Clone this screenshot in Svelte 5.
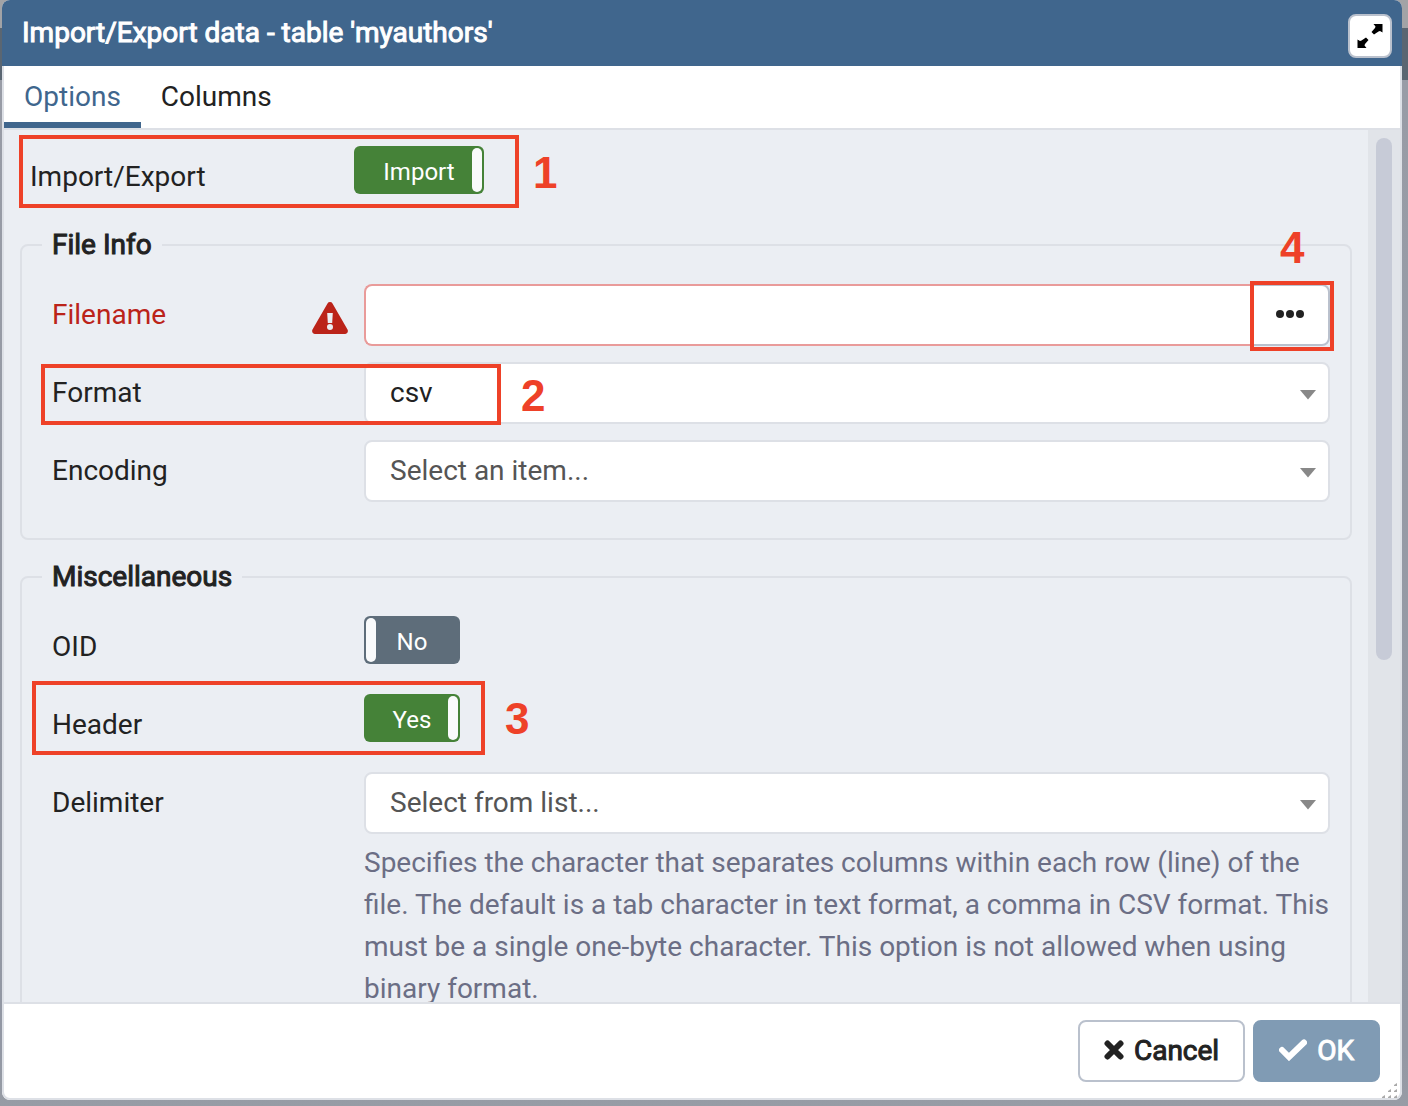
<script>
  let activeTab = $state('options');
  let isImport = $state(true);
  let oid = $state(false);
  let header = $state(true);
  let filename = $state('');
  let format = $state('csv');
  let encoding = $state('');
  let delimiter = $state('');
</script>

{#snippet caret()}
  <svg class="caret" viewBox="0 0 16 10" aria-hidden="true"><path d="M0 0h16L8 9.500z" /></svg>
{/snippet}

<main class="backdrop">
  <section class="dialog" role="dialog" aria-labelledby="dialog-title">
    <header class="titlebar">
      <h1 id="dialog-title">Import/Export data - table 'myauthors'</h1>
      <button class="maximize" type="button" aria-label="Maximize">
        <svg viewBox="0 0 26 26" aria-hidden="true">
          <path d="M17 1h8.500v8.500L23 8l-1.500.5-4.500 3-2.500-2.500L18 5l.500-1.500L16.500 1z" />
          <path d="M.5 16.500L3 18l1.500-.5 4.500-3 2.500 2.500L8 21l-.500 1.500L9.500 25h-9z" />
        </svg>
      </button>
    </header>

    <nav class="tabs">
      <button type="button" class:active={activeTab === 'options'} onclick={() => (activeTab = 'options')}>Options</button>
      <button type="button" class:active={activeTab === 'columns'} onclick={() => (activeTab = 'columns')}>Columns</button>
    </nav>

    <div class="body">
      <form class="content" id="options-form">
        <div class="row lead">
          <label for="direction">Import/Export</label>
          <span class="switch wide" class:on={isImport}>
            <input id="direction" type="checkbox" bind:checked={isImport} />
            <span class="text">{isImport ? 'Import' : 'Export'}</span>
          </span>
          <span class="mark mark-direction"><b>1</b></span>
        </div>

        <fieldset>
          <legend>File Info</legend>
          <div class="row">
            <label class="invalid" for="filename">
              Filename
              <svg class="warning" viewBox="0 0 36 32" aria-hidden="true">
                <path fill-rule="evenodd" d="M15.500 1.500a2.900 2.900 0 0 1 5 0l15 26c1.100 2-.3 4.500-2.500 4.500H3c-2.200 0-3.600-2.500-2.500-4.500zM15.200 11l.6 10h4.400l.6-10zM18 22a3 3 0 1 0 0 6 3 3 0 0 0 0-6z" />
              </svg>
            </label>
            <div class="file">
              <input id="filename" type="text" bind:value={filename} />
              <button type="button" aria-label="Select file">
                <svg viewBox="0 0 28 8" aria-hidden="true"><circle cx="4" cy="4" r="4" /><circle cx="14" cy="4" r="4" /><circle cx="24" cy="4" r="4" /></svg>
                <span class="mark mark-browse"><b>4</b></span>
              </button>
            </div>
          </div>
          <div class="row">
            <label for="format">Format</label>
            <div class="select">
              <select id="format" bind:value={format}>
                <option value="csv">csv</option>
                <option value="text">text</option>
                <option value="binary">binary</option>
              </select>
              {@render caret()}
            </div>
            <span class="mark mark-format"><b>2</b></span>
          </div>
          <div class="row">
            <label for="encoding">Encoding</label>
            <div class="select">
              <select id="encoding" class:empty={!encoding} bind:value={encoding}>
                <option value="">Select an item...</option>
                <option value="utf8">UTF8</option>
              </select>
              {@render caret()}
            </div>
          </div>
        </fieldset>

        <fieldset>
          <legend>Miscellaneous</legend>
          <div class="row">
            <label for="oid">OID</label>
            <span class="switch" class:on={oid}>
              <input id="oid" type="checkbox" bind:checked={oid} />
              <span class="text">{oid ? 'Yes' : 'No'}</span>
            </span>
          </div>
          <div class="row">
            <label for="header">Header</label>
            <span class="switch" class:on={header}>
              <input id="header" type="checkbox" bind:checked={header} />
              <span class="text">{header ? 'Yes' : 'No'}</span>
            </span>
            <span class="mark mark-header"><b>3</b></span>
          </div>
          <div class="row">
            <label for="delimiter">Delimiter</label>
            <div>
              <div class="select">
                <select id="delimiter" class:empty={!delimiter} bind:value={delimiter} aria-describedby="delimiter-help">
                  <option value="">Select from list...</option>
                  <option value=",">,</option>
                  <option value=";">;</option>
                </select>
                {@render caret()}
              </div>
              <p id="delimiter-help">Specifies the character that separates columns within each row (line) of the file. The default is a tab character in text format, a comma in CSV format. This must be a single one-byte character. This option is not allowed when using binary format.</p>
            </div>
          </div>
        </fieldset>
      </form>
      <div class="track"><div class="thumb"></div></div>
    </div>

    <footer>
      <button class="cancel" type="button">
        <svg width="20" height="20" viewBox="0 0 20 20" aria-hidden="true"><path d="M3.500 3.500l13 13M16.500 3.500l-13 13" /></svg>
        Cancel
      </button>
      <button class="ok" type="submit" form="options-form" disabled>
        <svg width="28" height="22" viewBox="0 0 28 22" aria-hidden="true"><path d="M3 11l7 7L25 3.500" /></svg>
        OK
      </button>
      <svg class="grip" viewBox="0 0 16 16" aria-hidden="true">
        <path d="M12 3l3-2v3h-3zM6 9l3-2v3H6zM12 9l3-2v3h-3zM0 15l3-2v3H0zM6 15l3-2v3H6zM12 15l3-2v3h-3z" />
      </svg>
    </footer>
  </section>
</main>

<style>
  :global(body) {
    margin: 0;
  }

  .backdrop,
  .backdrop * {
    box-sizing: border-box;
  }

  .backdrop {
    height: 100vh;
    padding: 0 6px 6px 2px;
    overflow: hidden;
    background: linear-gradient(#a2a3a6 0 28px, #5a6672 28px 80px, #989ca6 80px, #9398a4 95%, #979ca5);
    color: #222;
    font: 28px/42px Roboto, sans-serif;
  }

  button,
  input,
  select {
    margin: 0;
    color: inherit;
    font: inherit;
  }

  .dialog {
    display: flex;
    flex-direction: column;
    height: 100%;
    overflow: hidden;
    border-radius: 8px;
    background: #fff;
  }

  .tabs,
  .body,
  footer {
    border: solid #dde0e6;
    border-width: 0 2px;
  }

  .titlebar {
    display: flex;
    flex: none;
    align-items: center;
    justify-content: space-between;
    height: 66px;
    padding: 0 10px 0 20px;
    background: #40668d;
    color: #fff;
  }

  h1,
  legend,
  footer button {
    font-size: 28px;
    font-weight: 400;
    -webkit-text-stroke: 1px currentColor;
  }

  h1 {
    margin: 0;
  }

  .maximize {
    width: 44px;
    height: 44px;
    margin-top: 6px;
    padding: 7px;
    border: 2px solid #bac1cd;
    border-radius: 8px;
    background: #fff;
    color: #000;
  }

  .maximize svg {
    display: block;
    width: 26px;
    height: 26px;
    fill: currentColor;
  }

  .tabs {
    display: flex;
    flex: none;
    height: 64px;
    border-bottom-width: 2px;
  }

  .tabs button {
    padding: 6px 20px 0;
    border: 0;
    border-bottom: 6px solid transparent;
    background: none;
  }

  .tabs .active {
    border-color: #40668d;
    color: #40668d;
  }

  .body {
    display: flex;
    flex: 1;
    min-height: 0;
    background: #ebeef3;
  }

  .content {
    flex: 1;
    min-width: 0;
    padding: 16px 16px 0;
    overflow: hidden;
  }

  .track {
    flex: none;
    width: 32px;
    padding: 8px;
    background: #e1e4e9;
  }

  .thumb {
    height: 61%;
    border-radius: 8px;
    background: #c7cbd7;
  }

  fieldset {
    min-width: 0;
    margin: 0 0 16px;
    padding: 18px 20px 36px 30px;
    border: 2px solid #dde0e6;
    border-radius: 8px;
  }

  legend {
    margin-left: -10px;
    padding: 0 10px;
  }

  .row {
    position: relative;
    display: grid;
    grid-template-columns: 312px minmax(0, 1fr);
    min-height: 62px;
  }

  .row + .row {
    margin-top: 16px;
  }

  .lead {
    grid-template-columns: 324px minmax(0, 1fr);
    margin-bottom: 16px;
    padding-left: 10px;
  }

  label {
    display: flex;
    justify-content: space-between;
    height: 62px;
    padding: 10px 16px 10px 0;
  }

  .invalid {
    color: #bb2319;
  }

  .warning {
    align-self: end;
    width: 36px;
    height: 32px;
    margin-bottom: 2px;
    fill: currentColor;
  }

  .switch {
    position: relative;
    width: 96px;
    height: 48px;
    border-radius: 6px;
    background: #5e6d7a;
    color: #fff;
    font-size: 24px;
    line-height: 52px;
    text-align: center;
  }

  .wide {
    width: 130px;
  }

  .on {
    background: #458238;
  }

  .switch input {
    position: absolute;
    inset: 0;
    display: flex;
    width: 100%;
    padding: 2px;
    appearance: none;
    cursor: pointer;
  }

  .switch input::before {
    width: 10px;
    border-radius: 6px;
    background: #f9fafb;
    content: '';
  }

  .on input {
    justify-content: flex-end;
  }

  .file {
    display: flex;
    height: 62px;
  }

  .file input {
    flex: 1;
    min-width: 0;
    padding: 0 24px;
    border: 2px solid #e99b9a;
    border-right: 0;
    border-radius: 8px 0 0 8px;
    background: #fff;
  }

  .file button {
    position: relative;
    width: 80px;
    padding: 0 0 2px;
    border: 2px solid #bac1cd;
    border-radius: 0 8px 8px 0;
    background: #fff;
  }

  .file button svg {
    display: block;
    width: 28px;
    height: 8px;
    margin: 0 auto;
    fill: #222;
  }

  .select {
    position: relative;
    height: 62px;
  }

  select {
    width: 100%;
    height: 100%;
    padding: 0 48px 0 24px;
    border: 2px solid #dde0e6;
    border-radius: 8px;
    background: #fff;
    appearance: none;
  }

  .empty {
    color: #555;
  }

  .caret {
    position: absolute;
    top: 28px;
    right: 14px;
    width: 16px;
    height: 10px;
    fill: #888;
    pointer-events: none;
  }

  p {
    margin: 8px 0 0;
    color: #6b6e85;
  }

  .mark {
    position: absolute;
    z-index: 1;
    border: 4px solid #ee4128;
    pointer-events: none;
  }

  .mark b {
    position: absolute;
    top: 50%;
    left: 100%;
    margin: -23px 0 0 24px;
    color: #ee4128;
    font: bold 44px/48px 'Liberation Sans', sans-serif;
  }

  .mark-direction {
    top: -11px;
    left: -1px;
    width: 500px;
    height: 73px;
  }

  .mark-direction b {
    margin-left: 18px;
  }

  .mark-format {
    top: 2px;
    left: -11px;
    width: 460px;
    height: 61px;
  }

  .mark-header {
    top: -13px;
    left: -20px;
    width: 453px;
    height: 74px;
  }

  .mark-browse {
    inset: -5px -6px -7px -2px;
  }

  .mark-browse b {
    top: -38px;
    left: 50%;
    margin-left: -12px;
  }

  footer {
    position: relative;
    display: flex;
    flex: none;
    gap: 8px;
    justify-content: flex-end;
    padding: 16px 20px;
    border-width: 2px;
    border-radius: 0 0 8px 8px;
  }

  footer button {
    display: flex;
    gap: 10px;
    align-items: center;
    height: 62px;
    padding: 0 24px;
    border: 2px solid #bac1cd;
    border-radius: 8px;
    background: #fff;
  }

  footer button svg {
    margin-bottom: 2px;
    fill: none;
    stroke: currentColor;
    stroke-linecap: round;
    stroke-width: 6px;
  }

  footer .ok {
    border-color: #809bb4;
    background: #809bb4;
    color: #fff;
  }

  .grip {
    position: absolute;
    right: 2px;
    bottom: 0;
    width: 16px;
    height: 16px;
    fill: #aaa;
  }
</style>
